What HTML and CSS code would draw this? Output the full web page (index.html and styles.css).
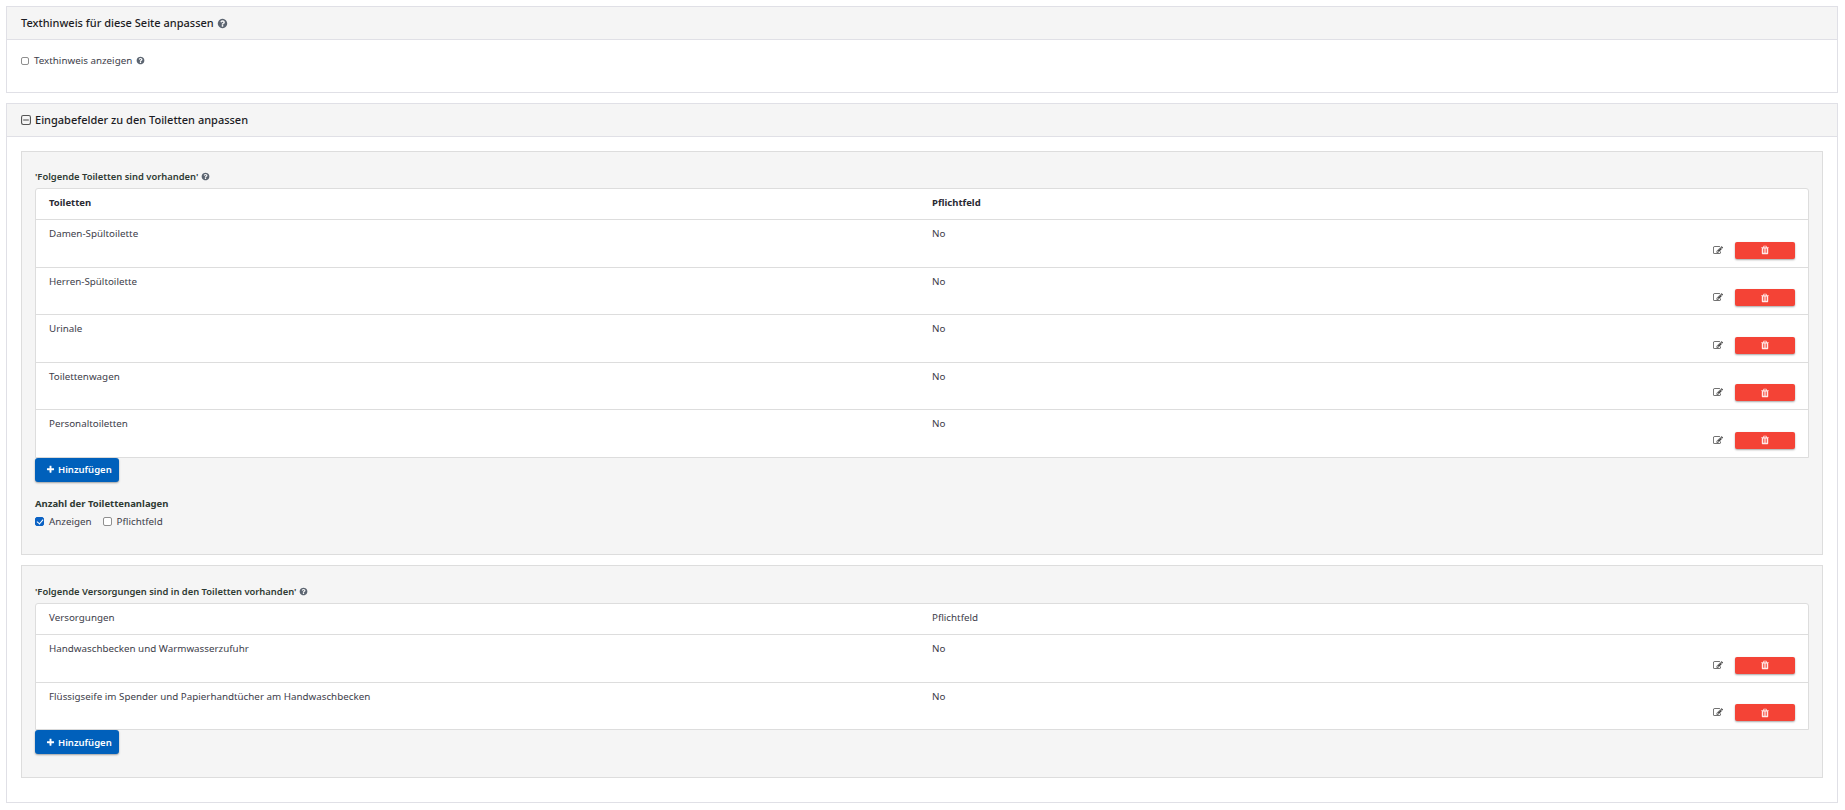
FILE: index.html
```html
<!DOCTYPE html>
<html lang="de">
<head>
<meta charset="utf-8">
<title>Toiletten anpassen</title>
<link rel="stylesheet" href="styles.css">
</head>
<body>
<svg class="defs" width="0" height="0" aria-hidden="true">
  <symbol id="i-q" viewBox="0 0 1792 1792"><path d="M1024 1376v-192q0-14-9-23t-23-9h-192q-14 0-23 9t-9 23v192q0 14 9 23t23 9h192q14 0 23-9t9-23zm256-672q0-88-55.5-163t-138.5-116-170-41q-243 0-371 213-15 24 8 42l132 100q7 6 19 6 16 0 25-12 53-68 86-92 34-24 86-24 48 0 85.5 26t37.5 59q0 38-20 61t-68 45q-63 28-115.5 86.5t-52.5 125.5v36q0 14 9 23t23 9h192q14 0 23-9t9-23q0-19 21.5-49.5t54.5-49.5q32-18 49-28.5t46-35 44.5-48 28-60.5 12.5-81zm384 192q0 209-103 385.5t-279.5 279.5-385.5 103-385.5-103-279.5-279.5-103-385.5 103-385.5 279.5-279.5 385.5-103 385.5 103 279.5 279.5 103 385.5z"/></symbol>
  <symbol id="i-plus" viewBox="0 0 1792 1792"><path d="M1600 736v192q0 40-28 68t-68 28h-416v416q0 40-28 68t-68 28h-192q-40 0-68-28t-28-68v-416h-416q-40 0-68-28t-28-68v-192q0-40 28-68t68-28h416v-416q0-40 28-68t68-28h192q40 0 68 28t28 68v416h416q40 0 68 28t28 68z"/></symbol>
  <symbol id="i-trash" viewBox="0 0 1792 1792"><path d="M704 1376v-704q0-14-9-23t-23-9h-64q-14 0-23 9t-9 23v704q0 14 9 23t23 9h64q14 0 23-9t9-23zm256 0v-704q0-14-9-23t-23-9h-64q-14 0-23 9t-9 23v704q0 14 9 23t23 9h64q14 0 23-9t9-23zm256 0v-704q0-14-9-23t-23-9h-64q-14 0-23 9t-9 23v704q0 14 9 23t23 9h64q14 0 23-9t9-23zm-544-992h448l-48-117q-7-9-17-11h-317q-10 2-17 11zm928 32v64q0 14-9 23t-23 9h-96v948q0 83-47 143.5t-113 60.5h-832q-66 0-113-58.5t-47-141.5v-952h-96q-14 0-23-9t-9-23v-64q0-14 9-23t23-9h309l70-167q15-37 54-63t79-26h320q40 0 79 26t54 63l70 167h309q14 0 23 9t9 23z"/></symbol>
  <symbol id="i-edit" viewBox="0 0 1792 1792"><path d="M888 1184l116-116-152-152-116 116v56h96v96h56zm440-720q-16-16-33 1l-350 350q-17 17-1 33t33-1l350-350q17-17 1-33zm80 594v190q0 119-84.5 203.5t-203.5 84.5h-832q-119 0-203.5-84.5t-84.5-203.5v-832q0-119 84.5-203.5t203.5-84.5h832q63 0 117 25 15 7 18 23 3 17-9 29l-49 49q-14 14-32 8-23-6-45-6h-832q-66 0-113 47t-47 113v832q0 66 47 113t113 47h832q66 0 113-47t47-113v-126q0-13 9-22l64-64q15-15 35-7t20 29zm-96-738l288 288-672 672h-288v-288zm444 132l-92 92-288-288 92-92q28-28 68-28t68 28l152 152q28 28 28 68t-28 68z"/></symbol>
</svg>

<section class="panel panel-first">
  <header class="panel-head">
    <h2 class="panel-title">Texthinweis für diese Seite anpassen <svg class="ico ico-q"><use href="#i-q"/></svg></h2>
  </header>
  <div class="panel-body panel-body-short">
    <label class="check check-hint"><input type="checkbox"> Texthinweis anzeigen <svg class="ico ico-q-sm"><use href="#i-q"/></svg></label>
  </div>
</section>

<section class="panel">
  <header class="panel-head">
    <h2 class="panel-title"><svg class="ico-minus" viewBox="0 0 9 9"><rect x=".5" y=".5" width="8" height="8" rx="1.5"/><path d="M2 4.5h5"/></svg>Eingabefelder zu den Toiletten anpassen</h2>
  </header>
  <div class="panel-body">
    <div class="well">
      <h3 class="well-title">'Folgende Toiletten sind vorhanden' <svg class="ico ico-q-sm"><use href="#i-q"/></svg></h3>
      <div class="list">
        <div class="row row-head row-head-bold"><div>Toiletten</div><div>Pflichtfeld</div></div>
        <div class="row"><div>Damen-Spültoilette</div><div>No</div><div class="actions"><button class="edit" type="button" aria-label="Bearbeiten"><svg class="ico ico-edit"><use href="#i-edit"/></svg></button><button class="del" type="button" aria-label="Löschen"><svg class="ico ico-trash"><use href="#i-trash"/></svg></button></div></div>
        <div class="row"><div>Herren-Spültoilette</div><div>No</div><div class="actions"><button class="edit" type="button" aria-label="Bearbeiten"><svg class="ico ico-edit"><use href="#i-edit"/></svg></button><button class="del" type="button" aria-label="Löschen"><svg class="ico ico-trash"><use href="#i-trash"/></svg></button></div></div>
        <div class="row"><div>Urinale</div><div>No</div><div class="actions"><button class="edit" type="button" aria-label="Bearbeiten"><svg class="ico ico-edit"><use href="#i-edit"/></svg></button><button class="del" type="button" aria-label="Löschen"><svg class="ico ico-trash"><use href="#i-trash"/></svg></button></div></div>
        <div class="row"><div>Toilettenwagen</div><div>No</div><div class="actions"><button class="edit" type="button" aria-label="Bearbeiten"><svg class="ico ico-edit"><use href="#i-edit"/></svg></button><button class="del" type="button" aria-label="Löschen"><svg class="ico ico-trash"><use href="#i-trash"/></svg></button></div></div>
        <div class="row"><div>Personaltoiletten</div><div>No</div><div class="actions"><button class="edit" type="button" aria-label="Bearbeiten"><svg class="ico ico-edit"><use href="#i-edit"/></svg></button><button class="del" type="button" aria-label="Löschen"><svg class="ico ico-trash"><use href="#i-trash"/></svg></button></div></div>
      </div>
      <button class="add" type="button"><svg class="ico ico-plus"><use href="#i-plus"/></svg>Hinzufügen</button>
      <div class="field-label">Anzahl der Toilettenanlagen</div>
      <div class="checks">
        <label class="check"><input type="checkbox" checked> Anzeigen</label>
        <label class="check"><input type="checkbox"> Pflichtfeld</label>
      </div>
    </div>

    <div class="well well-second">
      <h3 class="well-title">'Folgende Versorgungen sind in den Toiletten vorhanden' <svg class="ico ico-q-sm"><use href="#i-q"/></svg></h3>
      <div class="list">
        <div class="row row-head"><div>Versorgungen</div><div>Pflichtfeld</div></div>
        <div class="row"><div>Handwaschbecken und Warmwasserzufuhr</div><div>No</div><div class="actions"><button class="edit" type="button" aria-label="Bearbeiten"><svg class="ico ico-edit"><use href="#i-edit"/></svg></button><button class="del" type="button" aria-label="Löschen"><svg class="ico ico-trash"><use href="#i-trash"/></svg></button></div></div>
        <div class="row"><div>Flüssigseife im Spender und Papierhandtücher am Handwaschbecken</div><div>No</div><div class="actions"><button class="edit" type="button" aria-label="Bearbeiten"><svg class="ico ico-edit"><use href="#i-edit"/></svg></button><button class="del" type="button" aria-label="Löschen"><svg class="ico ico-trash"><use href="#i-trash"/></svg></button></div></div>
      </div>
      <button class="add" type="button"><svg class="ico ico-plus"><use href="#i-plus"/></svg>Hinzufügen</button>
    </div>
  </div>
</section>
</body>
</html>
```
FILE: styles.css
```css
* { box-sizing: border-box; }
html, body { margin: 0; background: #fff; }
body {
  padding: 6px 7px 0 6px;
  font-family: "Noto Sans", "Open Sans", sans-serif;
  font-size: 9.8px;
  color: #3d3d4a;
  overflow: hidden;
  height: 810px;
}
.defs { position: absolute; }
.ico { display: inline-block; fill: currentColor; vertical-align: middle; }
.panel { border: 1px solid #e0e0e6; background: #fff; }
.panel-first { margin-bottom: 10px; }
.panel-head {
  height: 33px;
  background: #f5f5f5;
  border-bottom: 1px solid #e0e0e6;
  padding: 0 14px;
  display: flex;
  align-items: center;
}
.panel-title { margin: -1px 0 0; font-size: 11px; font-weight: 500; color: #1c1c24; }
.panel-body { padding: 14px 14px 24px; }
.panel-body-short { padding: 14px 14px 0; height: 52px; }
.ico-q { width: 11px; height: 11px; color: #5b6470; margin-top: -2px; }
.ico-q-sm { width: 9px; height: 9px; color: #5b6470; margin-top: -1px; }
.ico-minus { width: 10px; height: 10px; margin-right: 4px; vertical-align: -1px; fill: none; stroke: #555; stroke-width: 1; }
.check { display: inline-flex; align-items: center; gap: 5px; color: #3d3d4a; }
.check-hint .ico { margin-left: -1px; }
.check input {
  appearance: none;
  position: relative;
  width: 9px;
  height: 9px;
  margin: 0;
  background: #fff;
  border: 1px solid #8f8f8f;
  border-radius: 2px;
}
.check input:checked { background: #0b62c4; border-color: #0b62c4; }
.check input:checked::after {
  content: "";
  position: absolute;
  left: 2px;
  top: 0;
  width: 3px;
  height: 5px;
  border: solid #fff;
  border-width: 0 1.4px 1.4px 0;
  transform: rotate(40deg);
}
.check-hint input { width: 8px; height: 8px; }
.well {
  border: 1px solid #ddd;
  background: #f5f5f5;
  padding: 18px 13px 0;
  height: 404px;
}
.well-second { margin-top: 10px; height: 213px; padding-top: 19px; }
.well-title { margin: 0 0 4px; font-size: 9.4px; line-height: 14px; font-weight: 600; color: #2f3a33; }
.list { background: #fff; border: 1px solid #ddd; border-radius: 3px 3px 0 0; }
.row {
  display: grid;
  grid-template-columns: 883px 1fr auto;
  height: 47.6px;
  padding: 0 13px;
  border-top: 1px solid #ddd;
}
.row > div:nth-child(-n+2) { padding-top: 7px; line-height: 14px; }
.row-head { height: 30px; border-top: 0; }
.row-head > div:nth-child(-n+2) { padding-top: 7px; }
.row-head-bold { font-weight: 700; font-size: 9.5px; color: #2a2a33; }
.actions { display: flex; align-items: flex-end; gap: 12px; padding: 0 0 8px; }
.edit { border: 0; background: none; padding: 0; height: 17px; width: 10px; display: flex; align-items: center; color: #444; }
.ico-edit { width: 11px; height: 11px; }
.del {
  width: 60px;
  height: 17px;
  border: 0;
  border-radius: 2px;
  background: #f44336;
  color: #ffe9e8;
  padding: 0;
  display: flex;
  align-items: center;
  justify-content: center;
  box-shadow: 0 1px 2px rgba(0,0,0,.35);
}
.ico-trash { width: 10px; height: 10px; }
.add {
  display: flex;
  align-items: center;
  gap: 3px;
  width: 84px;
  height: 24px;
  margin-top: 0;
  padding: 0 0 0 11px;
  border: 0;
  border-radius: 3px;
  background: #0060bb;
  color: #fff;
  font: 600 9.5px "Noto Sans", "Open Sans", sans-serif;
  box-shadow: 0 1px 2px rgba(0,0,0,.35);
}
.ico-plus { width: 9px; height: 9px; }
.field-label { margin-top: 15px; font-size: 9.5px; font-weight: 700; color: #2f3a33; line-height: 14px; }
.checks { display: flex; gap: 11px; margin-top: 4px; line-height: 14px; }
```
